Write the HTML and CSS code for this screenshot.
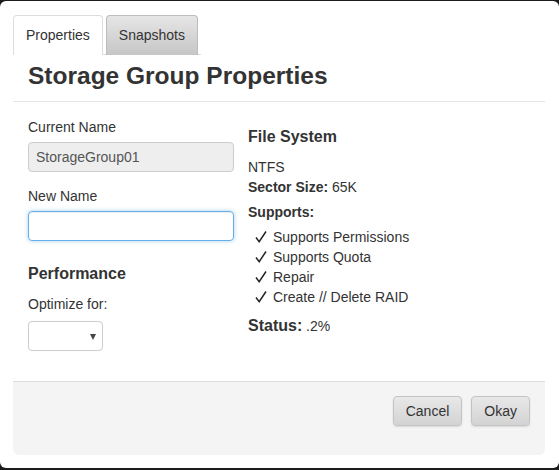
FILE: index.html
```html
<!DOCTYPE html>
<html>
<head>
<meta charset="utf-8">
<link rel="stylesheet" href="styles.css">
</head>
<body>
<div class="window">
  <div class="tabs">
    <div class="tab active">Properties</div>
    <div class="tab">Snapshots</div>
  </div>
  <div class="header">
    <h1 class="title">Storage Group Properties</h1>
  </div>
  <div class="body">
    <div class="col-left">
      <div class="label">Current Name</div>
      <div class="input disabled">StorageGroup01</div>
      <div class="label gap">New Name</div>
      <div class="input focus"></div>
      <h2 class="section perf">Performance</h2>
      <div class="label">Optimize for:</div>
      <div class="select"></div>
    </div>
    <div class="col-right">
      <h2 class="section fs">File System</h2>
      <div class="line fs-name">NTFS</div>
      <div class="line"><b>Sector Size:</b> 65K</div>
      <div class="line supports"><b>Supports:</b></div>
      <ul class="checks">
        <li><svg class="tick" width="18" height="20" viewBox="0 0 18 20"><path d="M1 10.5 L4.2 14.6 L11 4.5" fill="none" stroke="#222" stroke-width="1.5"/></svg>Supports Permissions</li>
        <li><svg class="tick" width="18" height="20" viewBox="0 0 18 20"><path d="M1 10.5 L4.2 14.6 L11 4.5" fill="none" stroke="#222" stroke-width="1.5"/></svg>Supports Quota</li>
        <li><svg class="tick" width="18" height="20" viewBox="0 0 18 20"><path d="M1 10.5 L4.2 14.6 L11 4.5" fill="none" stroke="#222" stroke-width="1.5"/></svg>Repair</li>
        <li><svg class="tick" width="18" height="20" viewBox="0 0 18 20"><path d="M1 10.5 L4.2 14.6 L11 4.5" fill="none" stroke="#222" stroke-width="1.5"/></svg>Create // Delete RAID</li>
      </ul>
      <div class="status"><b>Status:</b> .2%</div>
    </div>
  </div>
  <div class="footer">
    <button class="btn">Cancel</button>
    <button class="btn">Okay</button>
  </div>
</div>
</body>
</html>
```

FILE: styles.css
```css
html, body {
  margin: 0;
  padding: 0;
  background: #1c1c1c;
  height: 470px;
  overflow: hidden;
}
body {
  font-family: "Liberation Sans", Arial, sans-serif;
  font-size: 14px;
  line-height: 20px;
  color: #333;
}
.window {
  margin-top: 1px;
  height: 467px;
  box-sizing: border-box;
  background: #fff;
  border-radius: 6px;
  padding: 14px 14px 13px 13px;
  display: flex;
  flex-direction: column;
}
.tabs {
  display: flex;
  align-self: flex-start;
  gap: 3px;
  border-bottom: 1px solid #ddd;
  padding-right: 3px;
}
.tab {
  padding: 9px 12px 9px 12px;
  border: 1px solid #bdbdbd;
  border-bottom: none;
  border-radius: 4px 4px 0 0;
  margin-bottom: -1px;
  background: linear-gradient(#e6e6e6, #c6c6c6);
  color: #333;
}
.tab.active {
  background: #fff;
  border-color: #ddd;
  padding-bottom: 10px;
}
.header {
  padding: 0 0 10px 15px;
  border-bottom: 1px solid #e5e5e5;
}
.title {
  margin: 6px 0 0 0;
  font-size: 24.5px;
  line-height: 30px;
  font-weight: bold;
  color: #333;
}
.body {
  flex: 1;
  display: flex;
  gap: 14px;
  padding: 15px 15px 0 15px;
}
.col-left {
  width: 206px;
  display: flex;
  flex-direction: column;
}
.col-right {
  flex: 1;
  display: flex;
  flex-direction: column;
}
.label {
  line-height: 20px;
}
.label.gap {
  margin-top: 14px;
}
.input {
  margin-top: 5px;
  height: 30px;
  box-sizing: border-box;
  border: 1px solid #ccc;
  border-radius: 4px;
  padding: 4px 7px;
  color: #555;
  line-height: 20px;
}
.input.disabled {
  background: #eee;
}
.input.focus {
  border-color: #66afe9;
  box-shadow: inset 0 1px 1px rgba(0,0,0,.075), 0 0 4px rgba(102,175,233,.6);
}
.section {
  margin: 0;
  font-size: 16px;
  line-height: 20px;
  font-weight: bold;
}
.perf {
  margin-top: 23px;
  margin-bottom: 10px;
}
.select {
  position: relative;
  margin-top: 7px;
  width: 75px;
  height: 30px;
  box-sizing: border-box;
  border: 1px solid #ccc;
  border-radius: 4px;
}
.select::after {
  content: "";
  position: absolute;
  right: 6px;
  top: 12px;
  border-left: 3.5px solid transparent;
  border-right: 3.5px solid transparent;
  border-top: 6px solid #444;
}
.fs {
  margin-top: 10px;
}
.fs-name {
  margin-top: 10px;
}
.supports {
  margin-top: 5px;
}
.checks {
  list-style: none;
  margin: 5px 0 0 0;
  padding: 0 0 0 7px;
}
.checks li {
  line-height: 20px;
  display: flex;
  align-items: flex-start;
}
.tick {
  flex: none;
  display: block;
}
.status {
  margin-top: 9px;
  line-height: 20px;
}
.status b {
  font-size: 16px;
}
.footer {
  height: 74px;
  box-sizing: border-box;
  background: #f4f4f4;
  border-top: 1px solid #ddd;
  border-radius: 0 0 6px 6px;
  padding: 14px 15px 0 0;
  display: flex;
  justify-content: flex-end;
  align-items: flex-start;
  gap: 9px;
}
.btn {
  font-family: "Liberation Sans", Arial, sans-serif;
  font-size: 14px;
  line-height: 20px;
  color: #333;
  height: 30px;
  padding: 4px 12px;
  border: 1px solid #c4c4c4;
  border-radius: 4px;
  background: linear-gradient(#e8e8e8, #d3d3d3);
  box-shadow: 0 1px 2px rgba(0,0,0,.12);
}
```
